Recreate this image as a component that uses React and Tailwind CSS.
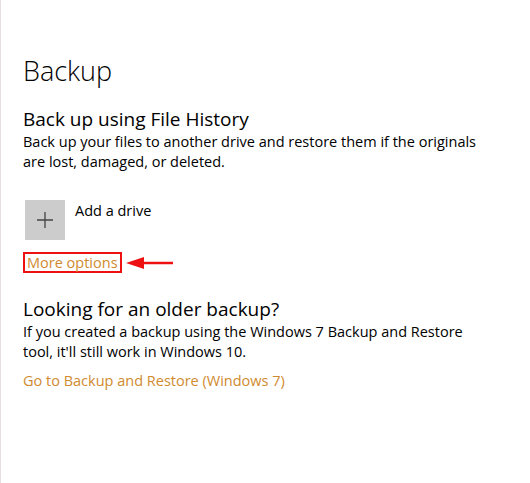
export default function App() {
  return (
    <div
      className="h-[483px] w-[530px] border-l border-[#e6dfe3] bg-white text-black"
      style={{ fontFamily: '"Open Sans", "Noto Sans", sans-serif' }}
    >
      <div className="pl-[22px] pt-[53px]">
        <h1 className="text-[27px] font-light leading-[36px]">Backup</h1>

        <h2 className="mt-[17px] text-[19px] leading-[26px]">Back up using File History</h2>
        <p className="w-[455px] text-[14.5px] leading-[20px]">
          Back up your files to another drive and restore them if the originals are lost, damaged, or deleted.
        </p>

        <div className="mt-[28px] flex items-start gap-[10px] pl-[2px]">
          <div className="flex h-[40px] w-[40px] items-center justify-center bg-[#cccccc]">
            <svg width="18" height="18" viewBox="0 0 18 18">
              <path d="M9 1v16M1 9h16" stroke="#444" strokeWidth="1.3" />
            </svg>
          </div>
          <span className="text-[14.5px] leading-[22px]">Add a drive</span>
        </div>

        <div className="mt-[12px] flex items-center">
          <span className="border-2 border-[#ee1111] px-[2px] text-[14.5px] leading-[17px] text-[#d08a2f]">
            More options
          </span>
          <svg width="50" height="14" viewBox="0 0 50 14" className="ml-[4px]">
            <path d="M16 7h31" stroke="#ee1111" strokeWidth="2.5" />
            <path d="M0 7l18-6v12z" fill="#ee1111" />
          </svg>
        </div>

        <h2 className="mt-[23px] text-[19px] leading-[26px]">Looking for an older backup?</h2>
        <p className="w-[455px] text-[14.5px] leading-[20px]">
          If you created a backup using the Windows 7 Backup and Restore tool, it'll still work in Windows 10.
        </p>
        <p className="mt-[9px] text-[14.5px] leading-[20px] text-[#d08a2f]">
          Go to Backup and Restore (Windows 7)
        </p>
      </div>
    </div>
  );
}
